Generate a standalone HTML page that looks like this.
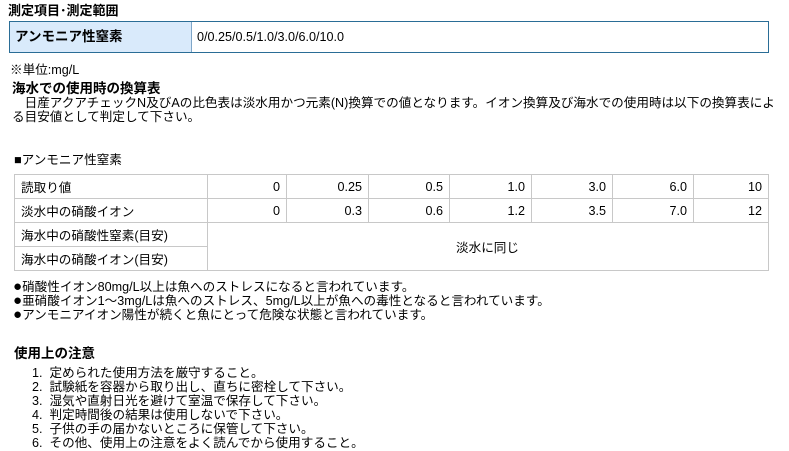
<!DOCTYPE html>
<html><head><meta charset="utf-8"><style>
*{margin:0;padding:0;box-sizing:border-box}
body{width:789px;height:451px;background:#fff;position:relative;overflow:hidden;font-family:"Liberation Sans","Noto Sans CJK JP",sans-serif;font-size:12.6px;color:#000}
.a{position:absolute;white-space:nowrap;line-height:14px}
b,.b{font-weight:bold}
table{position:absolute;border-collapse:collapse}
.t2 td{border:1px solid #c8c8c8;height:24px;padding:0 6px;font-size:12.6px}
.t2 td.n{text-align:right}
.d{font-size:15px;line-height:12px}
</style></head><body>
<div class="a b" style="left:8px;top:4px;font-size:13px">測定項目･測定範囲</div>
<div style="position:absolute;left:9px;top:21px;width:760px;height:32px;border:1px solid #2a6d96"></div>
<div style="position:absolute;left:10px;top:22px;width:182px;height:30px;background:#d9eafb;border-right:1px solid #7fa6c8"></div>
<div class="a b" style="left:15px;top:30px;font-size:13.5px">アンモニア性窒素</div>
<div class="a" style="left:197px;top:30px">0/0.25/0.5/1.0/3.0/6.0/10.0</div>
<div class="a" style="left:10px;top:63px">※単位:mg/L</div>
<div class="a b" style="left:12px;top:82px;font-size:13.5px">海水での使用時の換算表</div>
<div class="a" style="left:12px;top:96px">　日産アクアチェックN及びAの比色表は淡水用かつ元素(N)換算での値となります。イオン換算及び海水での使用時は以下の換算表によ</div>
<div class="a" style="left:12px;top:110px">る目安値として判定して下さい。</div>
<div class="a" style="left:14px;top:153px">■アンモニア性窒素</div>
<table class="t2" style="left:14px;top:174px;width:755px">
<tr><td style="width:193px">読取り値</td><td class="n" style="width:79px">0</td><td class="n" style="width:82px">0.25</td><td class="n" style="width:81px">0.5</td><td class="n" style="width:82px">1.0</td><td class="n" style="width:81px">3.0</td><td class="n" style="width:81px">6.0</td><td class="n">10</td></tr>
<tr><td>淡水中の硝酸イオン</td><td class="n">0</td><td class="n">0.3</td><td class="n">0.6</td><td class="n">1.2</td><td class="n">3.5</td><td class="n">7.0</td><td class="n">12</td></tr>
<tr><td>海水中の硝酸性窒素(目安)</td><td colspan="7" rowspan="2" style="padding-left:248px">淡水に同じ</td></tr>
<tr><td>海水中の硝酸イオン(目安)</td></tr>
</table>
<div class="a" style="left:13px;top:280px"><span class="d">●</span>硝酸性イオン80mg/L以上は魚へのストレスになると言われています。</div>
<div class="a" style="left:13px;top:294px"><span class="d">●</span>亜硝酸イオン1～3mg/Lは魚へのストレス、5mg/L以上が魚への毒性となると言われています。</div>
<div class="a" style="left:13px;top:308px"><span class="d">●</span>アンモニアイオン陽性が続くと魚にとって危険な状態と言われています。</div>
<div class="a b" style="left:14px;top:347px;font-size:13.5px">使用上の注意</div>
<div class="a" style="left:32px;top:366px">1.&nbsp; 定められた使用方法を厳守すること。</div>
<div class="a" style="left:32px;top:380px">2.&nbsp; 試験紙を容器から取り出し、直ちに密栓して下さい。</div>
<div class="a" style="left:32px;top:394px">3.&nbsp; 湿気や直射日光を避けて室温で保存して下さい。</div>
<div class="a" style="left:32px;top:408px">4.&nbsp; 判定時間後の結果は使用しないで下さい。</div>
<div class="a" style="left:32px;top:422px">5.&nbsp; 子供の手の届かないところに保管して下さい。</div>
<div class="a" style="left:32px;top:436px">6.&nbsp; その他、使用上の注意をよく読んでから使用すること。</div>
</body></html>
